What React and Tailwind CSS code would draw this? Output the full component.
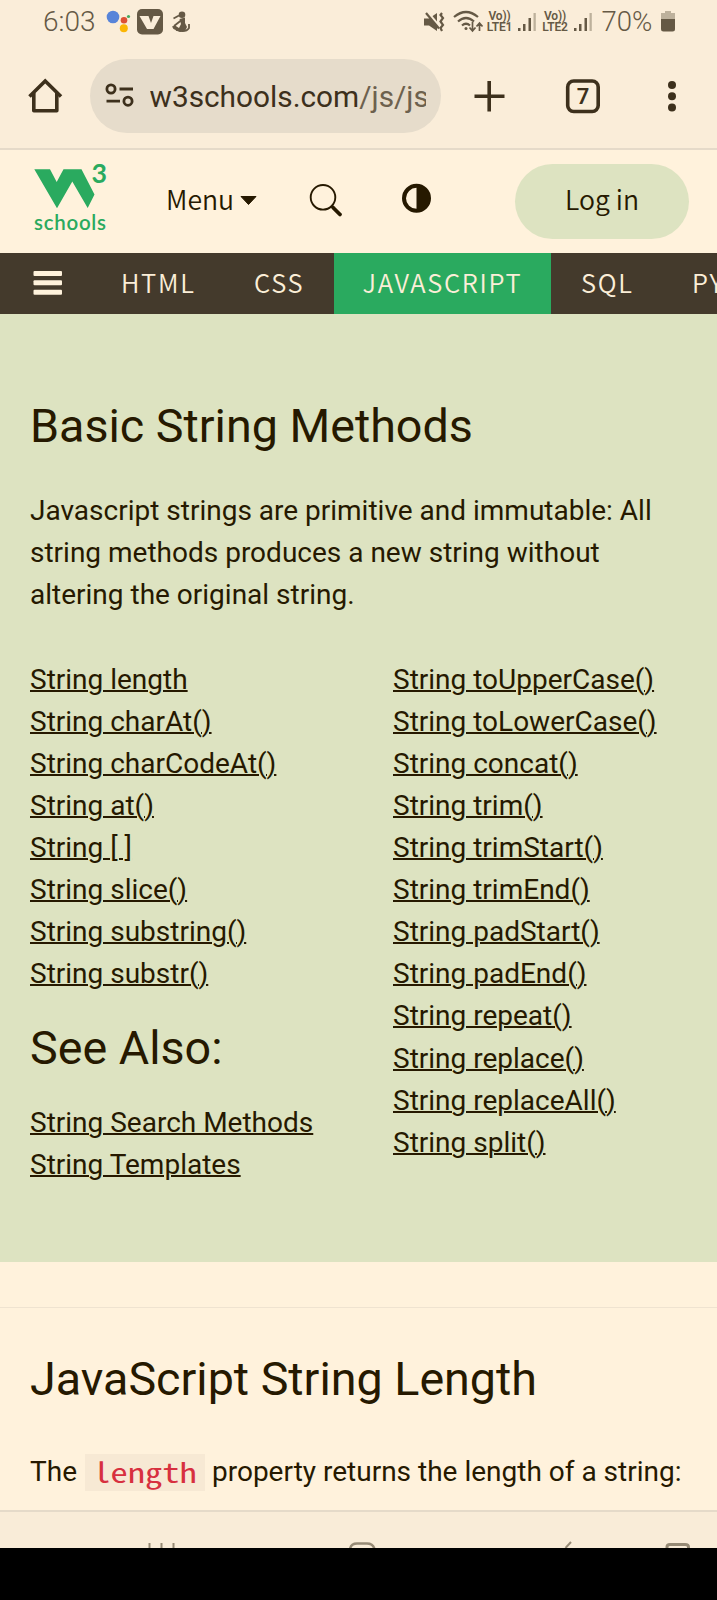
import React from "react";

const INK = "#3d301c";

function StatusBar() {
  return (
    <div className="flex h-[44px] items-start pt-[8px] text-[#655945]">
      <div className="ml-[43px] w-[61px] whitespace-nowrap font-['Roboto',sans-serif] text-[28px] font-[350] leading-[28px]">6:03</div>
      <svg className="h-[28px] w-[90px] shrink-0" viewBox="104 8 90 28">
        <circle cx="113" cy="17" r="6.3" fill="#5784d9" />
        <circle cx="124" cy="20.3" r="3.3" fill="#dd5034" />
        <circle cx="128.5" cy="16.5" r="1.6" fill="#45a860" />
        <circle cx="123.8" cy="28.3" r="4" fill="#fbb605" />
        <rect x="137" y="9" width="26" height="25.5" rx="5" fill="#655945" />
        <path d="M139.500 16H148.500L151 23L153.500 16H160.500L153.500 29H147Z" fill="#faedd9" />
        <circle cx="182" cy="14.800" r="3.300" fill="#655945" />
        <path d="M173.500 18.500L179 15.500M174 26L181 20.500" fill="none" stroke="#655945" strokeWidth="1.800" />
        <path d="M179.500 19L185 17.500L185 23L187 27L185 31L180 32L173.500 29L172 26.500L175 25.500L179 28L181 24Z" fill="#655945" />
        <path d="M176 30Q186 33 189 28V24" fill="none" stroke="#655945" strokeWidth="1.800" />
      </svg>
      <svg className="ml-[230px] h-[28px] w-[60px] shrink-0" viewBox="424 8 60 28" fill="none" stroke="#655945">
        <path d="M424 18.500H429L437 13V31L429 25.500H424Z" fill="#655945" stroke="none" />
        <path d="M427.500 12.500L438 25" stroke="#faedd9" strokeWidth="3" />
        <path d="M426 13L439 28.500" strokeWidth="2.200" />
        <path d="M442 13L440.500 15L443 18L440.500 21.500L443 25L440.500 28L442 31" strokeWidth="2.200" />
        <path d="M454 17Q466 7 478 17M458 21.500Q466 14.500 474 21.500M462 25.500Q466 22 470 25.500" strokeWidth="2.200" />
        <circle cx="466" cy="28.500" r="1.500" fill="#655945" stroke="none" />
        <path d="M472.500 22V30M469.500 27.500L472.500 31L475.500 27.500M479.500 31V23.500M476.500 26.500L479.500 23L482.500 26.500" strokeWidth="1.700" />
      </svg>
      <Lte n="1" />
      <Signal />
      <div className="w-[1.500px]" />
      <Lte n="2" />
      <Signal />
      <div className="ml-[8px] w-[58px] whitespace-nowrap font-['Roboto',sans-serif] text-[27.500px] font-[350] leading-[28px]">70%</div>
      <svg className="h-[28px] w-[15px] shrink-0" viewBox="659 8 15 28">
        <path d="M664 11H670V13H674V20H660V13H664Z" fill="#bdb19c" />
        <path d="M660 19H674V29Q674 31.500 671.500 31.500H662.500Q660 31.500 660 29Z" fill="#655945" />
      </svg>
    </div>
  );
}

function Lte({ n }) {
  return (
    <div className="ml-[2px] flex w-[27px] shrink-0 flex-col items-center pt-[3px] font-['Roboto',sans-serif] text-[12px] font-semibold leading-[11px] tracking-[-0.200px]">
      <span className="whitespace-nowrap">Vo))</span>
      <span className="whitespace-nowrap">LTE{n}</span>
    </div>
  );
}

function Signal() {
  return (
    <svg className="ml-[4px] h-[28px] w-[21px] shrink-0" viewBox="517 8 21 28" fill="#655945">
      <rect x="518" y="28" width="2.500" height="3" />
      <rect x="523" y="24" width="2.500" height="7" />
      <rect x="528.500" y="18" width="2.500" height="13" />
      <rect x="533.500" y="13" width="2.300" height="18" fill="#bdb19c" />
    </svg>
  );
}

function Toolbar() {
  return (
    <div className="flex h-[104px] items-start pt-[14.500px]">
      <svg className="ml-[25px] mt-[17.500px] h-[40px] w-[40px] shrink-0" viewBox="25 76 40 40" fill="none" stroke={INK} strokeWidth="3.600" strokeLinejoin="round">
        <path d="M29.500 96.500L45.200 81L61 96.500" strokeLinejoin="miter" />
        <path d="M33.800 93V110.800H56.800V93" />
      </svg>
      <div className="ml-[25px] flex h-[74px] w-[351px] shrink-0 items-center rounded-full bg-[#e6dccb]">
        <svg className="ml-[15px] h-[26px] w-[30px] shrink-0" viewBox="105 83.500 30 26" fill="none" stroke={INK} strokeWidth="2.800">
          <circle cx="111" cy="89.500" r="4.100" />
          <path d="M119.500 89.500H133M106.500 101.700H120" />
          <circle cx="128" cy="101.700" r="4.100" />
        </svg>
        <div className="ml-[14.500px] mt-[2px] w-[276px] overflow-hidden whitespace-nowrap font-['Roboto',sans-serif] text-[29.800px] leading-[40px] text-[#3d301c]">
          w3schools.com<span className="text-[#6d614e]">/js/js</span>
        </div>
      </div>
      <svg className="h-[74px] w-[276px] shrink-0" viewBox="441 58.500 276 74" fill="none" stroke={INK}>
        <path d="M474.500 95.700H504.500M489.200 80.500V111" strokeWidth="3.600" />
        <rect x="567.700" y="80.500" width="30.500" height="30.500" rx="6" strokeWidth="3.600" />
        <text x="583" y="103.500" textAnchor="middle" className="font-['Roboto',sans-serif] text-[22px] font-semibold" fill={INK} stroke="none">7</text>
        <g fill={INK} stroke="none">
          <circle cx="672" cy="84.500" r="4" />
          <circle cx="672" cy="95.700" r="4" />
          <circle cx="672" cy="107" r="4" />
        </g>
      </svg>
    </div>
  );
}

function SiteHeader() {
  return (
    <header className="flex h-[103px] items-start bg-[#fff2dc] font-['Noto_Sans_CJK_SC',sans-serif] text-[26.600px] font-[350] text-[#261900]">
      <svg className="ml-[30px] mt-[5px] h-[90px] w-[84px] shrink-0" viewBox="30 155 84 90" fill="#2aaa5f">
        <path d="M34.300 169.300H50L56.700 182L63.500 169.300H81.500L94.500 194.500L87.700 208L72.300 181.500L57 208.300Z" />
        <text x="91.500" y="182.500" textLength="15.500" lengthAdjust="spacingAndGlyphs" className="font-['Lato',sans-serif] text-[27px] font-bold">3</text>
        <text x="34" y="230" textLength="72" className="font-['Lato',sans-serif] text-[20.500px] font-semibold">schools</text>
      </svg>
      <div className="ml-[52px] mt-[29px] w-[68px] leading-[40px]">Menu</div>
      <svg className="ml-[6px] mt-[44px] h-[14px] w-[18px] shrink-0" viewBox="240 194 18 14" fill="#261900">
        <path d="M241 196.500H256L248.500 204.500Z" stroke="#261900" strokeLinejoin="round" />
      </svg>
      <svg className="ml-[50px] mt-[32px] h-[36px] w-[36px] shrink-0" viewBox="308 182 36 36" fill="none" stroke="#261900">
        <circle cx="323" cy="197.300" r="12.300" strokeWidth="1.900" />
        <path d="M331.500 206L334 208.500" strokeWidth="2" />
        <path d="M333 207.500L340 214.500" strokeWidth="3.800" strokeLinecap="round" />
      </svg>
      <svg className="ml-[57px] mt-[33px] h-[31px] w-[31px] shrink-0" viewBox="401 183 31 31">
        <circle cx="416.500" cy="198.300" r="12.500" fill="none" stroke="#261900" strokeWidth="4" />
        <path d="M416.500 185A13.300 13.300 0 0 1 416.500 211.600Z" fill="#261900" />
      </svg>
      <div className="ml-[83px] mt-[13.500px] h-[75px] w-[174px] rounded-full bg-[#dde3c1] text-center leading-[70px]">Log in</div>
    </header>
  );
}

function TopicNav() {
  return (
    <nav className="flex h-[60.500px] overflow-hidden whitespace-nowrap bg-[#443a2c] font-['Noto_Sans_CJK_SC',sans-serif] text-[25.500px] font-[350] leading-[58px] tracking-[1.700px] text-[#fbeed8]">
      <svg className="ml-[33px] mt-[17px] h-[26px] w-[30px] shrink-0" viewBox="0 0 30 26" fill="#fff2dc">
        <rect x="0.500" y="1" width="28.500" height="5" rx="1" />
        <rect x="0.500" y="10.300" width="28.500" height="5" rx="1" />
        <rect x="0.500" y="19.700" width="28.500" height="5" rx="1" />
      </svg>
      <div className="ml-[58px] w-[133px] shrink-0">HTML</div>
      <div className="w-[80px] shrink-0">CSS</div>
      <div className="w-[217px] shrink-0 bg-[#2aaa5f] pl-[28.500px]">JAVASCRIPT</div>
      <div className="ml-[30px] w-[111px] shrink-0">SQL</div>
      <div className="shrink-0">PY</div>
    </nav>
  );
}

function Links({ items }) {
  return (
    <ul>
      {items.map((t) => (
        <li key={t}>
          <a className="underline decoration-[2.400px]">{t}</a>
        </li>
      ))}
    </ul>
  );
}

const LEFT = ["String length", "String charAt()", "String charCodeAt()", "String at()", "String [ ]", "String slice()", "String substring()", "String substr()"];
const RIGHT = ["String toUpperCase()", "String toLowerCase()", "String concat()", "String trim()", "String trimStart()", "String trimEnd()", "String padStart()", "String padEnd()", "String repeat()", "String replace()", "String replaceAll()", "String split()"];

export default function App() {
  return (
    <div className="flex h-[1600px] w-[717px] flex-col overflow-hidden bg-[#fff2dc] font-['Roboto',sans-serif] text-[28px] leading-[42.070px] text-[#261900]">
      <div className="h-[150px] shrink-0 border-b-2 border-[#e5dac9] bg-[#faedd9]">
        <StatusBar />
        <Toolbar />
      </div>
      <SiteHeader />
      <TopicNav />
      <section className="h-[948.500px] shrink-0 bg-[#dde3c1] pl-[30px] pt-[77px]">
        <h2 className="text-[46.650px] leading-[70px]">Basic String Methods</h2>
        <p className="mt-[29px] whitespace-nowrap">
          Javascript strings are primitive and immutable: All
          <br />
          string methods produces a new string without
          <br />
          altering the original string.
        </p>
        <div className="mt-[43.300px] grid grid-cols-[363px_1fr]">
          <div>
            <Links items={LEFT} />
            <h2 className="mb-[18.700px] mt-[17.400px] text-[46.650px] leading-[70px]">See Also:</h2>
            <Links items={["String Search Methods", "String Templates"]} />
          </div>
          <Links items={RIGHT} />
        </div>
      </section>
      <section className="mt-[45px] h-[203px] shrink-0 border-t border-[#efe3d0] pl-[30px] pt-[36px]">
        <h2 className="text-[46.650px] leading-[70px]">JavaScript String Length</h2>
        <p className="mt-[37px] flex items-center whitespace-nowrap">
          The
          <code className="ml-[8px] mr-[7px] flex h-[37px] w-[120px] justify-center bg-[#f7e9d4] font-['Noto_Sans_Mono_CJK_SC','Liberation_Mono',monospace] text-[28px] leading-[35px] text-[#d7303f]">
            <span className="inline-block origin-center scale-x-[1.230]">length</span>
          </code>
          property returns the length of a string:
        </p>
      </section>
      <div className="h-[37.500px] shrink-0 border-t-2 border-[#e5dac9] bg-[#f9ecd8]">
        <svg className="h-full w-full" viewBox="0 1512 717 35.500" fill="none" stroke="#968a75">
          <path d="M149.500 1543V1548M161.500 1543V1548M173.500 1543V1548" strokeWidth="2" />
          <path d="M350 1549Q351 1543.500 357 1543.500H367Q373 1543.500 374.500 1549" strokeWidth="2.500" />
          <path d="M571 1542L565.500 1548" strokeWidth="2" />
          <path d="M667 1550V1547Q667 1544.500 670 1544.500H685Q688.500 1544.500 688.500 1547V1550" strokeWidth="3" />
        </svg>
      </div>
      <div className="flex-1 bg-black" />
    </div>
  );
}
